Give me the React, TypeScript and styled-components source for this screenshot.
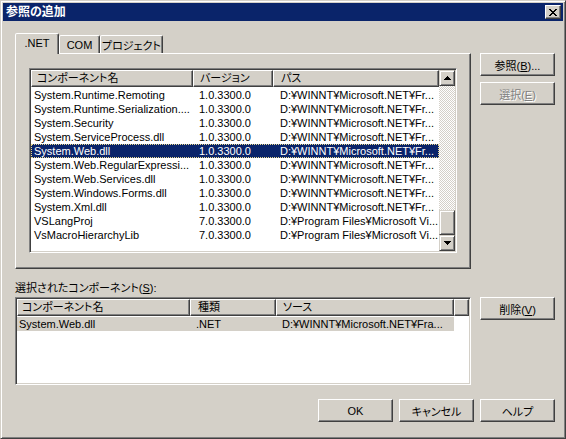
import React from 'react';
import styled, { createGlobalStyle } from 'styled-components';

const face = '#d4d0c8';
const shadow = '#808080';
const dark = '#404040';
const navy = '#0a246a';

const GlobalStyle = createGlobalStyle`
    html, body {
        margin: 0;
        padding: 0;
        background: ${face};
    }
    body {
        font-family: "Liberation Sans", "Noto Sans CJK JP", sans-serif;
        font-size: 11px;
        color: #000;
        font-feature-settings: "palt";
    }
`;

interface Column {
    label: string;
    width: number;
    headPad: number;
    cellPad: number;
}

type Selection = 'focus' | 'inactive';

interface ListViewProps {
    width: number;
    height: number;
    columns: Column[];
    rows: string[][];
    selected: number;
    selection: Selection;
    scrollbar?: boolean;
}

const refColumns: Column[] = [
    { label: 'コンポーネント名', width: 162, headPad: 5, cellPad: 3 },
    { label: 'バージョン', width: 80, headPad: 6, cellPad: 6 },
    { label: 'パス', width: 166, headPad: 7, cellPad: 7 },
];

const netPath = 'D:¥WINNT¥Microsoft.NET¥Fr...';
const vsPath = 'D:¥Program Files¥Microsoft Vi...';

const refRows: string[][] = [
    ['System.Runtime.Remoting', '1.0.3300.0', netPath],
    ['System.Runtime.Serialization....', '1.0.3300.0', netPath],
    ['System.Security', '1.0.3300.0', netPath],
    ['System.ServiceProcess.dll', '1.0.3300.0', netPath],
    ['System.Web.dll', '1.0.3300.0', netPath],
    ['System.Web.RegularExpressi...', '1.0.3300.0', netPath],
    ['System.Web.Services.dll', '1.0.3300.0', netPath],
    ['System.Windows.Forms.dll', '1.0.3300.0', netPath],
    ['System.Xml.dll', '1.0.3300.0', netPath],
    ['VSLangProj', '7.0.3300.0', vsPath],
    ['VsMacroHierarchyLib', '7.0.3300.0', vsPath],
];

const pickedColumns: Column[] = [
    { label: 'コンポーネント名', width: 173, headPad: 4, cellPad: 2 },
    { label: '種類', width: 86, headPad: 7, cellPad: 6 },
    { label: 'ソース', width: 178, headPad: 6, cellPad: 6 },
];

const pickedRows: string[][] = [['System.Web.dll', '.NET', 'D:¥WINNT¥Microsoft.NET¥Fra...']];

const CloseGlyph = () => (
    <svg width="8" height="7" viewBox="0 0 8 7" shapeRendering="crispEdges">
        <path
            fill="#000"
            d="M0 0h2v1H0zM6 0h2v1H6zM1 1h2v1H1zM5 1h2v1H5zM2 2h4v1H2zM3 3h2v1H3zM2 4h4v1H2zM1 5h2v1H1zM5 5h2v1H5zM0 6h2v1H0zM6 6h2v1H6z"
        />
    </svg>
);

const Arrow = ({ down }: { down?: boolean }) => (
    <svg width="7" height="4" viewBox="0 0 7 4" shapeRendering="crispEdges">
        <path
            fill="#000"
            d={down ? 'M0 0h7v1H0zM1 1h5v1H1zM2 2h3v1H2zM3 3h1v1H3z' : 'M3 0h1v1H3zM2 1h3v1H2zM1 2h5v1H1zM0 3h7v1H0z'}
        />
    </svg>
);

const ListView = ({ width, height, columns, rows, selected, selection, scrollbar }: ListViewProps) => (
    <ListFrame $w={width} $h={height}>
        <ListBody>
            <HeaderRow>
                {columns.map((col) => (
                    <HeaderCell key={col.label} $w={col.width} $pad={col.headPad}>
                        {col.label}
                    </HeaderCell>
                ))}
                {!scrollbar && <HeaderCell $pad={0} />}
            </HeaderRow>
            <Rows>
                {rows.map((row, i) => (
                    <Row key={row[0]} $sel={i === selected ? selection : undefined}>
                        {row.map((text, j) => (
                            <Cell key={j} $w={columns[j].width} $pad={columns[j].cellPad}>
                                {text}
                            </Cell>
                        ))}
                    </Row>
                ))}
            </Rows>
        </ListBody>
        {scrollbar && (
            <ScrollBar>
                <ScrollButton>
                    <Arrow />
                </ScrollButton>
                <ScrollTrack />
                <ScrollThumb />
                <ScrollButton>
                    <Arrow down />
                </ScrollButton>
            </ScrollBar>
        )}
    </ListFrame>
);

const App = () => (
    <>
        <GlobalStyle />
        <Window>
            <TitleBar>
                <TitleText>参照の追加</TitleText>
                <CloseButton>
                    <CloseGlyph />
                </CloseButton>
            </TitleBar>
            <Body>
                <TopRow>
                    <TabArea>
                        <TabStrip>
                            <Tab $active $w={44}>.NET</Tab>
                            <Tab $w={41}>COM</Tab>
                            <Tab $w={63}>プロジェクト</Tab>
                        </TabStrip>
                        <TabPanel>
                            <ListView
                                width={428}
                                height={185}
                                columns={refColumns}
                                rows={refRows}
                                selected={4}
                                selection="focus"
                                scrollbar
                            />
                        </TabPanel>
                    </TabArea>
                    <SideColumn $top={20}>
                        <Button>
                            参照(<u>B</u>)...
                        </Button>
                        <Button disabled>
                            選択(<u>E</u>)
                        </Button>
                    </SideColumn>
                </TopRow>
                <FieldLabel>
                    選択されたコンポーネント(<u>S</u>):
                </FieldLabel>
                <TopRow>
                    <ListView
                        width={456}
                        height={88}
                        columns={pickedColumns}
                        rows={pickedRows}
                        selected={0}
                        selection="inactive"
                    />
                    <SideColumn $top={0}>
                        <Button>
                            削除(<u>V</u>)
                        </Button>
                    </SideColumn>
                </TopRow>
                <Footer>
                    <Button>OK</Button>
                    <Button>キャンセル</Button>
                    <Button>ヘルプ</Button>
                </Footer>
            </Body>
        </Window>
    </>
);

const Window = styled.div`
    box-sizing: border-box;
    width: 566px;
    height: 439px;
    padding: 2px;
    border: 1px solid;
    border-color: ${face} ${dark} ${dark} ${face};
    box-shadow: inset 1px 1px #fff, inset -1px -1px ${shadow};
    background: ${face};
    display: flex;
    flex-direction: column;
`;

const TitleBar = styled.div`
    flex: none;
    height: 18px;
    padding: 0 2px 0 3px;
    background: ${navy};
    display: flex;
    align-items: center;
    justify-content: space-between;
`;

const TitleText = styled.span`
    color: #fff;
    font-weight: bold;
    font-size: 12px;
    line-height: 18px;
`;

const CloseButton = styled.div`
    box-sizing: border-box;
    width: 16px;
    height: 14px;
    padding-right: 1px;
    border: 1px solid;
    border-color: #fff ${dark} ${dark} #fff;
    box-shadow: inset -1px -1px ${shadow};
    background: ${face};
    display: flex;
    align-items: center;
    justify-content: center;
`;

const Body = styled.div`
    flex: 1;
    display: flex;
    flex-direction: column;
    padding: 12px 8px 0 12px;
`;

const TopRow = styled.div`
    display: flex;
    align-items: flex-start;
    gap: 9px;
`;

const TabArea = styled.div`
    width: 456px;
    display: flex;
    flex-direction: column;
`;

const TabStrip = styled.div`
    height: 20px;
    display: flex;
    align-items: flex-end;
`;

const Tab = styled.div<{ $active?: boolean; $w: number }>`
    box-sizing: border-box;
    width: ${(p) => p.$w}px;
    height: ${(p) => (p.$active ? 21 : 18)}px;
    margin-bottom: ${(p) => (p.$active ? -1 : 0)}px;
    padding-bottom: ${(p) => (p.$active ? 2 : 0)}px;
    position: relative;
    z-index: ${(p) => (p.$active ? 1 : 0)};
    border: 1px solid;
    border-bottom: none;
    border-color: #fff ${dark} transparent #fff;
    border-radius: 2px 2px 0 0;
    box-shadow: inset -1px 0 ${shadow};
    background: ${face};
    display: flex;
    align-items: center;
    justify-content: center;
    white-space: nowrap;
`;

const TabPanel = styled.div`
    box-sizing: border-box;
    height: 216px;
    padding: 14px 0 0 13px;
    border: 1px solid;
    border-color: #fff ${dark} ${dark} #fff;
    box-shadow: inset -1px -1px ${shadow};
`;

const SideColumn = styled.div<{ $top: number }>`
    flex: none;
    width: 75px;
    padding-top: ${(p) => p.$top}px;
    display: flex;
    flex-direction: column;
    gap: 6px;
`;

const Button = styled.button`
    box-sizing: border-box;
    width: 75px;
    height: 23px;
    margin: 0;
    padding: 0;
    font: inherit;
    font-feature-settings: "palt";
    color: #000;
    background: ${face};
    border: 1px solid;
    border-color: #fff ${dark} ${dark} #fff;
    box-shadow: inset -1px -1px ${shadow};
    white-space: nowrap;
    &:disabled {
        color: ${shadow};
        text-shadow: 1px 1px #fff;
    }
`;

const FieldLabel = styled.div`
    height: 14px;
    margin: 12px 0 2px;
    line-height: 14px;
`;

const Footer = styled.div`
    display: flex;
    justify-content: flex-end;
    gap: 6px;
    margin-top: 14px;
`;

const ListFrame = styled.div<{ $w: number; $h: number }>`
    box-sizing: border-box;
    width: ${(p) => p.$w}px;
    height: ${(p) => p.$h}px;
    padding: 1px;
    border: 1px solid;
    border-color: ${shadow} #fff #fff ${shadow};
    box-shadow: inset 1px 1px ${dark}, inset -1px -1px ${face};
    background: #fff;
    display: flex;
`;

const ListBody = styled.div`
    flex: 1;
    min-width: 0;
    overflow: hidden;
    display: flex;
    flex-direction: column;
`;

const HeaderRow = styled.div`
    flex: none;
    height: 17px;
    display: flex;
`;

const HeaderCell = styled.div<{ $w?: number; $pad: number }>`
    box-sizing: border-box;
    ${(p) => (p.$w ? `width: ${p.$w}px; flex: none;` : 'flex: 1;')}
    height: 17px;
    padding-left: ${(p) => p.$pad}px;
    line-height: 15px;
    border: 1px solid;
    border-color: #fff ${dark} ${dark} #fff;
    box-shadow: inset -1px -1px ${shadow};
    background: ${face};
    white-space: nowrap;
    overflow: hidden;
`;

const Rows = styled.div`
    padding-top: 1px;
`;

const Row = styled.div<{ $sel?: Selection }>`
    display: flex;
    width: fit-content;
    height: 14px;
    line-height: 14px;
    background: ${(p) => (p.$sel === 'focus' ? navy : p.$sel === 'inactive' ? face : 'transparent')};
    color: ${(p) => (p.$sel === 'focus' ? '#fff' : '#000')};
    outline: ${(p) => (p.$sel === 'focus' ? '1px dotted #e8d88e' : 'none')};
    outline-offset: -1px;
`;

const Cell = styled.div<{ $w: number; $pad: number }>`
    box-sizing: border-box;
    flex: none;
    width: ${(p) => p.$w}px;
    padding-left: ${(p) => p.$pad}px;
    white-space: nowrap;
    overflow: hidden;
`;

const ScrollBar = styled.div`
    flex: none;
    width: 16px;
    display: flex;
    flex-direction: column;
`;

const raised = `
    box-sizing: border-box;
    border: 1px solid;
    border-color: ${face} ${dark} ${dark} ${face};
    box-shadow: inset 1px 1px #fff, inset -1px -1px ${shadow};
    background: ${face};
`;

const ScrollButton = styled.div`
    ${raised}
    flex: none;
    height: 16px;
    display: flex;
    align-items: center;
    justify-content: center;
`;

const ScrollTrack = styled.div`
    flex: 1;
    background: repeating-conic-gradient(${face} 0 25%, #fff 0 50%) 0 0 / 2px 2px;
`;

const ScrollThumb = styled.div`
    ${raised}
    flex: none;
    height: 25px;
`;

export default App;
